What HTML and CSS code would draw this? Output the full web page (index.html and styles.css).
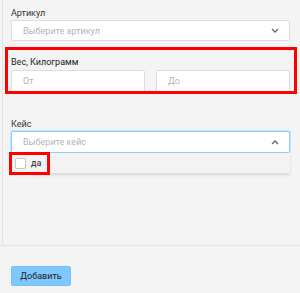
FILE: index.html
```html
<html>
  <head>
    <title>
      Добавить
    </title>
    <link rel="stylesheet" href="styles.css">
  </head>

  <body>
    <div class="panel">
      <div class="field first">
        <b class="label">Артикул</b>
        <div class="select">
          <span class="placeholder">Выберите артикул</span>
          <svg class="arrow" width="8" height="5" viewBox="0 0 8 5"><path d="M1 1 L4 4 L7 1" fill="none" stroke="#666" stroke-width="1.3"/></svg>
        </div>
      </div>

      <div class="field weight">
        <b class="label strong">Вес, Килограмм</b>
        <div class="range">
          <div class="input"><span class="placeholder">От</span></div>
          <div class="input"><span class="placeholder">До</span></div>
        </div>
        <div class="mark mark-weight"></div>
      </div>

      <div class="field case">
        <b class="label">Кейс</b>
        <div class="select open">
          <span class="placeholder">Выберите кейс</span>
          <svg class="arrow" width="8" height="5" viewBox="0 0 8 5"><path d="M1 4 L4 1 L7 4" fill="none" stroke="#666" stroke-width="1.3"/></svg>
        </div>
        <div class="dropdown">
          <label class="option"><span class="check"></span>да</label>
          <div class="mark mark-check"></div>
        </div>
      </div>
    </div>

    <div class="footer">
      <button class="add">Добавить</button>
    </div>
  </body>
</html>
```

FILE: styles.css
```css
body {
  margin: 0;
  background-color: #f4f4f4;
  font-family: Roboto, 'Liberation Sans', Arial, sans-serif;
  font-size: 9px;
  color: #333;
}

.panel {
  position: relative;
  margin-left: 2px;
  height: 245px;
  border-left: 1px solid #e3e3e3;
  box-sizing: border-box;
  padding: 0 10px 0 8px;
}

.field {
  position: relative;
}

.first {
  padding-top: 7px;
}

.weight {
  margin-top: 15px;
}

.case {
  margin-top: 26px;
}

.label {
  display: block;
  font-weight: normal;
  line-height: 12px;
  margin-bottom: 1px;
  color: #333;
}

.strong {
  margin-bottom: 2px;
  color: #222;
}

.select, .input {
  display: flex;
  align-items: center;
  justify-content: space-between;
  box-sizing: border-box;
  height: 21px;
  padding: 0 10px 0 11px;
  background-color: #fff;
  border: 1px solid #dcdcdc;
  border-radius: 2px;
}

.input {
  height: 22px;
  flex: 1;
}

.placeholder {
  color: #b4b4b4;
}

.range {
  display: flex;
  gap: 11px;
}

.open {
  height: 22px;
  border-color: #8ccfff;
  box-shadow: 0 0 0 1px #c6e6ff;
}

.dropdown {
  position: relative;
  height: 20px;
  background-color: #f3f3f3;
  box-shadow: 0 2px 3px rgba(0, 0, 0, 0.12);
  display: flex;
  align-items: center;
}

.option {
  display: flex;
  align-items: center;
  gap: 5px;
  padding-left: 4px;
  color: #222;
}

.check {
  width: 9px;
  height: 9px;
  background-color: #fff;
  border: 1px solid #c8c8c8;
  border-radius: 2px;
}

.mark {
  position: absolute;
  border: 3px solid #f00;
  box-sizing: border-box;
}

.mark-weight {
  left: -6px;
  right: -7px;
  top: -9px;
  height: 47px;
}

.mark-check {
  left: -2px;
  top: -1px;
  width: 41px;
  height: 23px;
}

.footer {
  border-top: 1px solid #e6e6e6;
  box-shadow: 0 -1px 1px rgba(0, 0, 0, 0.02);
  padding: 20px 11px;
}

.add {
  width: 60px;
  height: 20px;
  padding: 0;
  font-family: Roboto, 'Liberation Sans', Arial, sans-serif;
  font-size: 9px;
  color: #222;
  background-color: #7fc7ff;
  border: 1px solid #74c0fb;
  border-radius: 2px;
}
```
